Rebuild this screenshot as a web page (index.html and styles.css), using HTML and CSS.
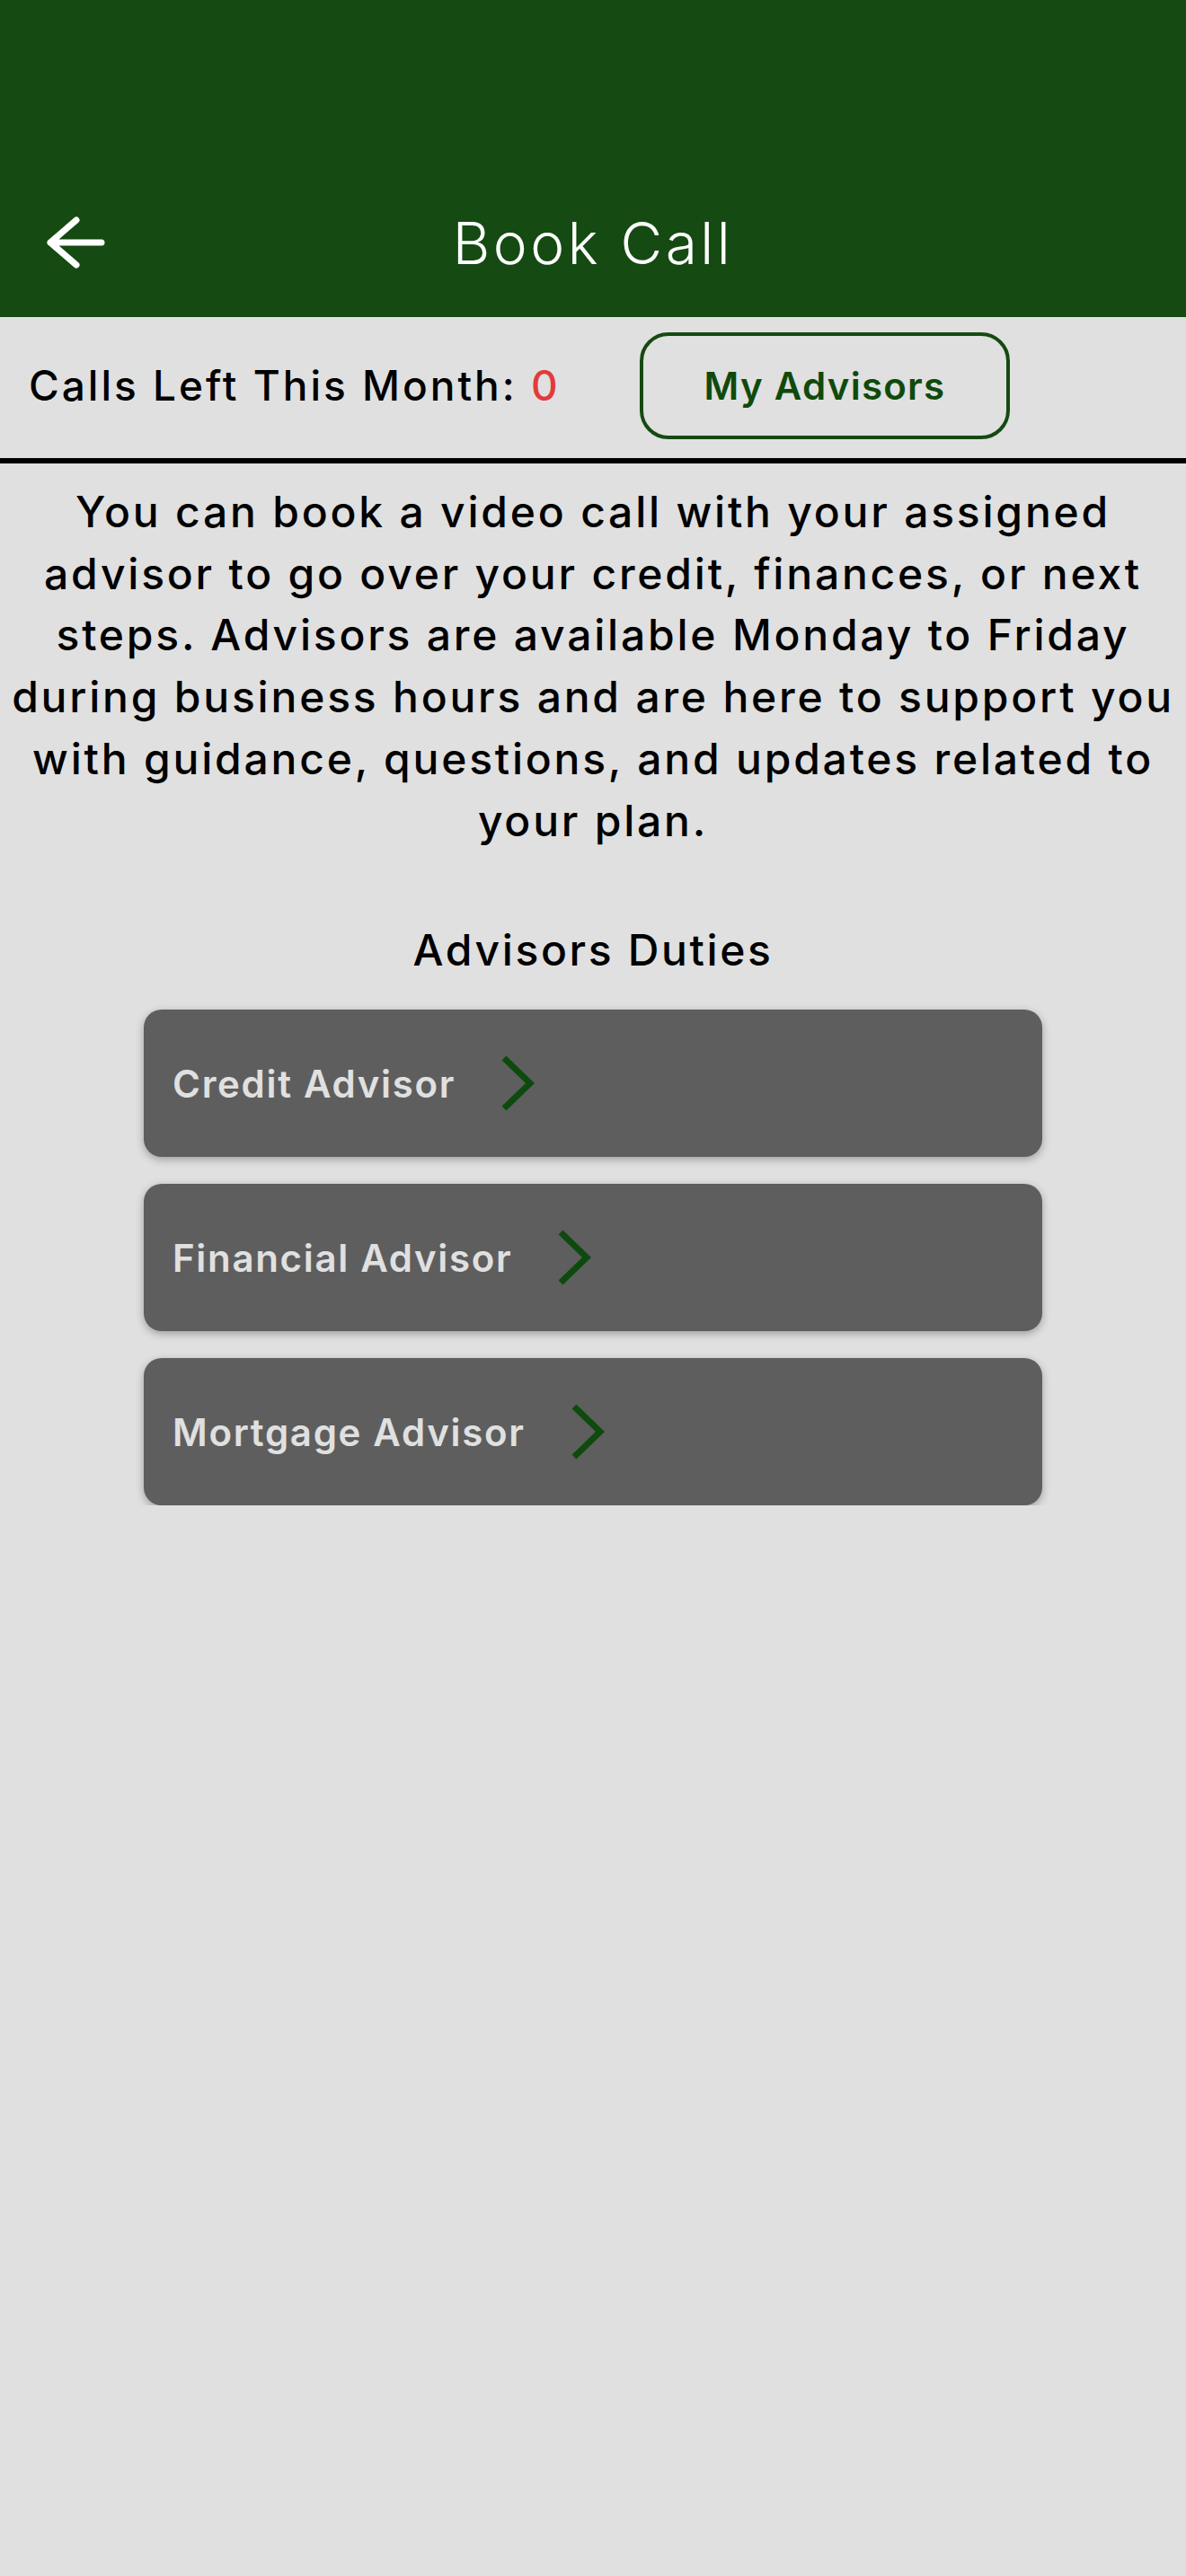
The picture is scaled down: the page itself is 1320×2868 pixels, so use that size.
FILE: index.html
```html
<!DOCTYPE html>
<html lang="en">
<head>
    <meta charset="UTF-8">
    <meta name="viewport" content="width=device-width, initial-scale=1.0">
    <title>Book Call</title>
    <link rel="stylesheet" href="styles.css">
</head>
<body>
    <header class="app-bar">
        <div class="nav">
            <button class="back-btn" aria-label="Back">
                <svg width="90" height="70" viewBox="0 0 90 70">
                    <path d="M45 10 L16 35 L45 60 M16 35 H73" fill="none" stroke="#fff" stroke-width="7" stroke-linecap="round" stroke-linejoin="round"/>
                </svg>
            </button>
            <h1>Book Call</h1>
        </div>
    </header>

    <section class="calls-row">
        <p class="calls-left">Calls Left This Month: <span class="count">0</span></p>
        <button class="advisors-btn">My Advisors</button>
    </section>

    <p class="intro">
        You can book a video call with your assigned<br>
        advisor to go over your credit, finances, or next<br>
        steps. Advisors are available Monday to Friday<br>
        during business hours and are here to support you<br>
        with guidance, questions, and updates related to<br>
        your plan.
    </p>

    <h2 class="duties-title">Advisors Duties</h2>

    <div class="duty-list">
        <button class="duty-card">
            <span>Credit Advisor</span>
            <svg class="chevron" width="40" height="64" viewBox="0 0 40 64"><path d="M4 4 L33 32 L4 60" fill="none" stroke="#0e4a0e" stroke-width="7"/></svg>
        </button>
        <button class="duty-card">
            <span>Financial Advisor</span>
            <svg class="chevron" width="40" height="64" viewBox="0 0 40 64"><path d="M4 4 L33 32 L4 60" fill="none" stroke="#0e4a0e" stroke-width="7"/></svg>
        </button>
        <button class="duty-card">
            <span>Mortgage Advisor</span>
            <svg class="chevron" width="40" height="64" viewBox="0 0 40 64"><path d="M4 4 L33 32 L4 60" fill="none" stroke="#0e4a0e" stroke-width="7"/></svg>
        </button>
    </div>
</body>
</html>
```

FILE: styles.css
```css
body {
    margin: 0;
    background-color: #e0e0e0;
    font-family: Inter, "Noto Sans", sans-serif;
    color: #000;
}
button {
    font-family: inherit;
    cursor: pointer;
}
.app-bar {
    background-color: #154a12;
    height: 353px;
    display: flex;
    align-items: flex-end;
}
.nav {
    width: 100%;
    height: 166px;
    display: grid;
    grid-template-columns: 1fr auto 1fr;
    align-items: center;
}
.back-btn {
    justify-self: start;
    margin-left: 40px;
    padding: 0;
    border: none;
    background: none;
    display: flex;
}
.nav h1 {
    margin: 0;
    color: #fff;
    font-size: 64px;
    font-weight: 300;
    letter-spacing: 0.055em;
}
.calls-row {
    box-sizing: border-box;
    height: 163px;
    display: flex;
    align-items: center;
    padding: 0 196px 5px 32px;
    border-bottom: 6px solid #000;
}
.calls-left {
    margin: 0;
    font-size: 46px;
    font-weight: 500;
    letter-spacing: 0.065em;
}
.count {
    color: #e23b3b;
}
.advisors-btn {
    margin-left: auto;
    width: 412px;
    height: 119px;
    border: 4px solid #154a12;
    border-radius: 32px;
    background: transparent;
    color: #0f4a0c;
    font-size: 42px;
    font-weight: 600;
    letter-spacing: 0.03em;
}
.intro {
    margin: 20px 4px 0;
    text-align: center;
    font-size: 48px;
    font-weight: 500;
    line-height: 68.7px;
    letter-spacing: 0.058em;
}
.duties-title {
    margin: 81px 0 0;
    text-align: center;
    font-size: 48px;
    font-weight: 500;
    line-height: 58px;
    letter-spacing: 0.055em;
}
.duty-list {
    width: 1000px;
    margin: 37px auto 0;
    display: flex;
    flex-direction: column;
    gap: 30px;
}
.duty-card {
    height: 164px;
    padding: 0 32px;
    border: none;
    border-radius: 20px;
    background-color: #5e5e5e;
    box-shadow: 0 3px 10px rgba(0, 0, 0, 0.3);
    display: flex;
    align-items: center;
    color: #e0e0e0;
    font-size: 42px;
    font-weight: 600;
    letter-spacing: 0.04em;
}
.chevron {
    margin-left: 50px;
}
```
